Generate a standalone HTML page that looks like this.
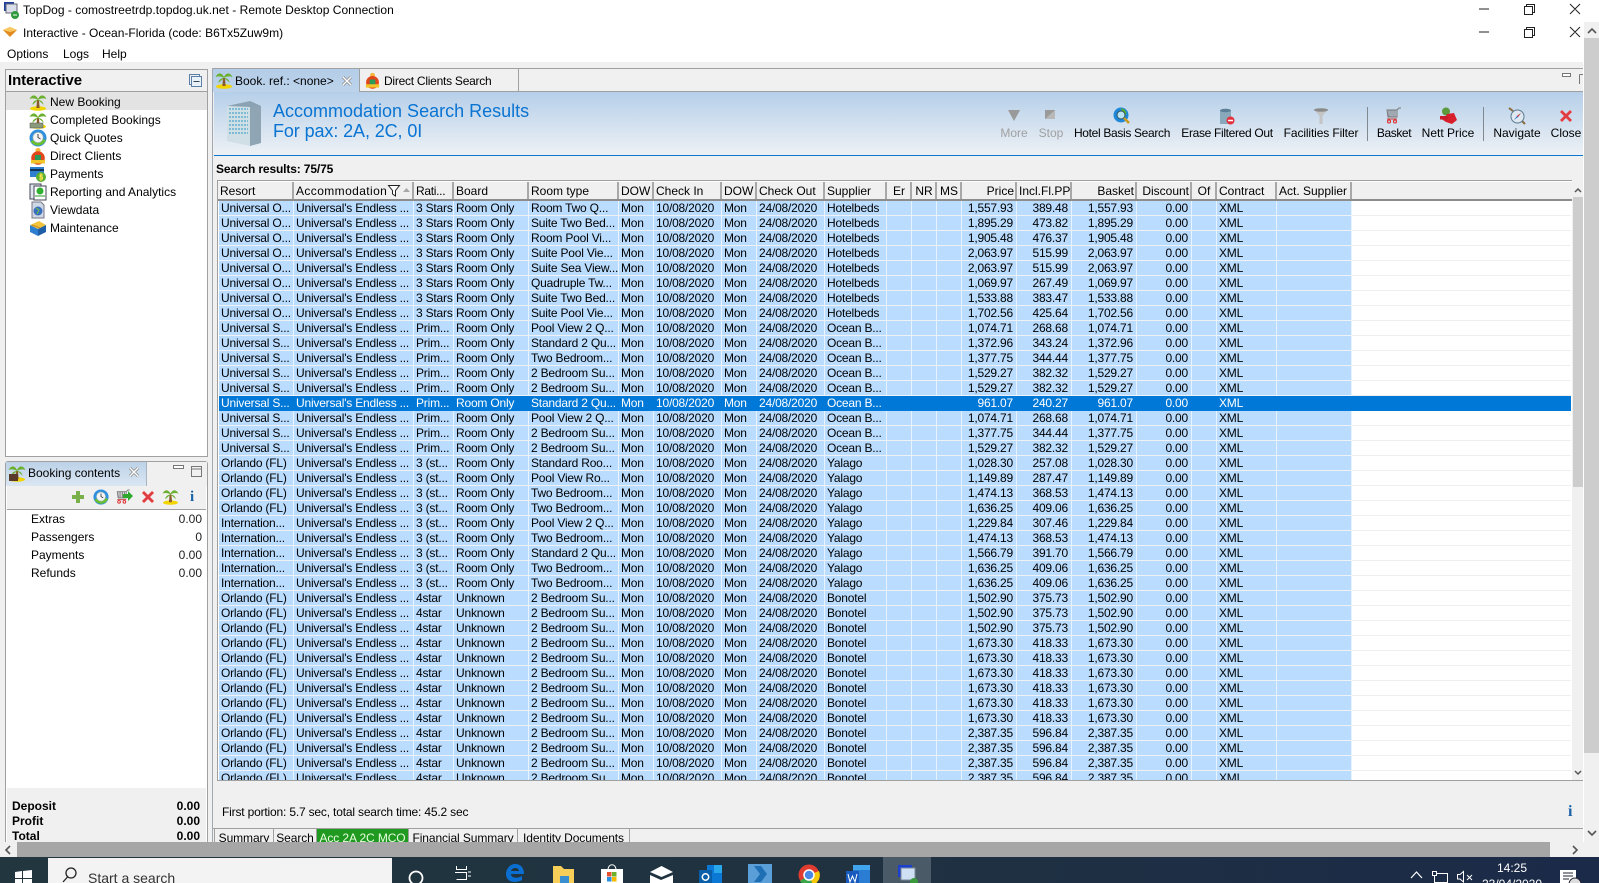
<!DOCTYPE html>
<html><head><meta charset="utf-8"><title>TopDog</title>
<style>
html,body{margin:0;padding:0;background:#fff}
body{position:relative;width:1599px;height:883px;overflow:hidden;font:12px "Liberation Sans",sans-serif;color:#000}
.a{position:absolute}
.t{position:absolute;white-space:nowrap;line-height:16px}
.c{transform:translateX(-50%)}
.r{text-align:right}
svg{position:absolute;overflow:visible}
#g{position:absolute;left:217px;top:180px;width:1355px;height:600px;background:#fff;border-top:1px solid #a0a0a0;border-left:1px solid #a0a0a0;overflow:hidden;box-sizing:border-box}
#h{position:absolute;left:0;top:1px;height:17px;width:1354px;background:#f0f0f0;border-bottom:2px solid #8c8c8c;box-sizing:content-box}
#h span{position:absolute;top:0;height:17px;line-height:18px;white-space:nowrap;border-right:2px solid #a8a8a8;padding:0 1px 0 2px;box-sizing:border-box;overflow:hidden}
table{position:absolute;left:1px;top:20px;border-collapse:separate;border-spacing:0;table-layout:fixed;width:1352px}
td{height:15px;padding:0 3px 0 2px;box-sizing:border-box;border-right:1px solid #e8f3ff;border-bottom:1px solid #eef2f6;background:#b9dcff;white-space:nowrap;overflow:hidden;line-height:14px;letter-spacing:-.2px}
td:nth-child(n+14):nth-child(-n+18){text-align:right}
td:nth-child(21){background:#fff;border-right:0;border-bottom:1px solid #efefef}
tr.s td,tr.s td:nth-child(21){background:#0078d7;color:#fff;border-color:#0078d7}
.btab{position:absolute;top:829px;height:13px;box-sizing:border-box;border-right:1px solid #a0a0a0;overflow:hidden;text-align:center;line-height:18px;white-space:nowrap;background:#f0f0f0;letter-spacing:-.1px}
</style></head><body>
<svg width="0" height="0" style="position:absolute"><defs>
<symbol id="palm" viewBox="0 0 18 18"><ellipse cx="9" cy="15.500" rx="8" ry="2.300" fill="#f2d500"/><path d="M8 7L10 7L10.600 15L7.400 15Z" fill="#8a5a2a"/><path d="M9 6C6.500 1 3 1.500 0.500 6C3 5 6 5 9 7C6 7 3.500 9 3.500 12C6 9.500 8 8 9 7C10 8 13 9.500 14.500 12C14.500 9 12 7 9 7C12 5 15 5 17.500 6C15 1.500 11.500 1 9 6Z" fill="#6cb030"/></symbol>
<symbol id="clock" viewBox="0 0 18 18"><circle cx="9" cy="9" r="8.500" fill="#2f8fe0"/><path d="M1.500 12A8.500 8.500 0 0 0 17 11L13 10A5 5 0 0 1 5 11Z" fill="#6cc02c"/><circle cx="9" cy="8.500" r="5.200" fill="#f4f4f4" stroke="#8aa" stroke-width=".6"/><path d="M9 5V8.500L11.500 10" stroke="#444" fill="none"/></symbol>
<symbol id="client" viewBox="0 0 18 18"><circle cx="9" cy="3.500" r="2.600" fill="#f6b73c"/><circle cx="9" cy="11" r="6.800" fill="#e2461a"/><rect x="6" y="8" width="6" height="6" fill="#2a9a58"/><rect x="2" y="13" width="14" height="3.500" fill="#f2c428"/></symbol>
<symbol id="x" viewBox="0 0 14 14"><path d="M3 1L7 5L11 1L13 3L9 7L13 11L11 13L7 9L3 13L1 11L5 7L1 3Z" fill="#e03c44" stroke="#f08a8a" stroke-width=".5"/></symbol>
<symbol id="cart" viewBox="0 0 18 18"><path d="M2 3H12V10H3ZM4 3V10M6 3V10M8 3V10M10 3V10M12 3L14 1H16" fill="none" stroke="#777" stroke-width="1"/><path d="M2 12H12" stroke="#c33"/><circle cx="4" cy="14.500" r="1.500" fill="none" stroke="#d22"/><circle cx="10" cy="14.500" r="1.500" fill="none" stroke="#d22"/></symbol>
</defs></svg>

<!-- title bars -->
<svg style="left:3px;top:2px" width="16" height="17" viewBox="0 0 16 17"><rect x="1" y="0" width="10" height="9" fill="#1d3f9c"/><rect x="3" y="2" width="11" height="9" fill="#d8dfe8" stroke="#667"/><circle cx="12" cy="13" r="4" fill="#2f9a3c"/><path d="M10 13h4" stroke="#fff"/></svg>
<div class="t" style="left:23px;top:2px;letter-spacing:.03px">TopDog - comostreetrdp.topdog.uk.net - Remote Desktop Connection</div>
<svg style="left:3px;top:27px" width="15" height="11" viewBox="0 0 15 11"><path d="M0 3L7 0L14 3L7 10Z" fill="#e08a20"/><path d="M0 3L7 0L14 3L7 5Z" fill="#f8c860"/></svg>
<div class="t" style="left:23px;top:25px">Interactive - Ocean-Florida (code: B6Tx5Zuw9m)</div>
<div class="t" style="left:7px;top:46px">Options</div><div class="t" style="left:63px;top:46px">Logs</div><div class="t" style="left:102px;top:46px">Help</div>

<svg style="left:1479px;top:3px" width="110" height="40" fill="none" stroke="#222" stroke-width="1">
<path d="M0 6H10M45.500 3.500H53.500V11.500H45.500ZM47.500 3.500V1.500H55.500V9.500H53.500M91 1L101 11M101 1L91 11"/>
<path d="M0 29H10M45.500 26.500H53.500V34.500H45.500ZM47.500 26.500V24.500H55.500V32.500H53.500M91 24L101 34M101 24L91 34"/></svg>

<!-- app bg -->
<div class="a" style="left:0;top:62px;width:1583px;height:780px;background:#f0f0f0"></div>
<div class="a" style="left:1584px;top:22px;width:15px;height:820px;background:#f0f0f0"></div>
<div class="a" style="left:1584px;top:38px;width:15px;height:715px;background:#cdcdcd"></div>
<svg style="left:1587px;top:28px" width="10" height="6" fill="none" stroke="#555" stroke-width="1.600"><path d="M1 5L5 1L9 5"/></svg>
<svg style="left:1587px;top:830px" width="10" height="6" fill="none" stroke="#555" stroke-width="1.600"><path d="M1 1L5 5L9 1"/></svg>

<!-- left panel -->
<div class="a" style="left:5px;top:69px;width:203px;height:388px;background:#fff;border:1px solid #a0a0a0;box-sizing:border-box"></div>
<div class="a" style="left:6px;top:70px;width:201px;height:21px;background:#f0f0f0;border-bottom:1px solid #a0a0a0"></div>
<div class="t" style="left:8px;top:73px;font-size:15px;font-weight:bold;letter-spacing:-.1px">Interactive</div>
<svg style="left:189px;top:74px" width="14" height="14" fill="none" stroke="#5b7fa6"><rect x="0.500" y="0.500" width="10" height="10"/><rect x="2.500" y="2.500" width="10" height="10" fill="#e8f0f8"/><path d="M4.500 7.500H10.500" stroke="#345"/></svg>
<div class="a" style="left:6px;top:92px;width:201px;height:18px;background:#e3e3e3"></div>
<svg style="left:29px;top:93px" width="18" height="18"><use href="#palm"/></svg>
<div class="t" style="left:50px;top:94px">New Booking</div>
<svg style="left:29px;top:111px" width="18" height="18"><use href="#palm"/><rect x="1" y="12" width="13" height="5" fill="#8a9a7a" stroke="#555" stroke-width=".5"/></svg>
<div class="t" style="left:50px;top:112px">Completed Bookings</div>
<svg style="left:29px;top:129px" width="18" height="18"><use href="#clock"/></svg>
<div class="t" style="left:50px;top:130px">Quick Quotes</div>
<svg style="left:29px;top:147px" width="18" height="18"><use href="#client"/></svg>
<div class="t" style="left:50px;top:148px">Direct Clients</div>
<svg style="left:29px;top:165px" width="18" height="18" viewBox="0 0 18 18"><rect x="1" y="2" width="14" height="10" fill="#2f7fd0"/><rect x="1" y="4" width="14" height="2" fill="#135"/><circle cx="12" cy="12" r="5" fill="#5ab030"/><path d="M12 8V16M14 10H11V12H13.500V14H10" stroke="#ffe24a" fill="none"/></svg>
<div class="t" style="left:50px;top:166px">Payments</div>
<svg style="left:29px;top:183px" width="18" height="18" viewBox="0 0 18 18"><rect x="1" y="1" width="11" height="15" fill="#dfe6ee" stroke="#445"/><rect x="5" y="3" width="12" height="14" fill="#fff" stroke="#445"/><circle cx="11" cy="8" r="3.500" fill="#2fb02f"/><path d="M6 13H16" stroke="#2a9a2a"/></svg>
<div class="t" style="left:50px;top:184px">Reporting and Analytics</div>
<svg style="left:29px;top:201px" width="18" height="18" viewBox="0 0 18 18"><path d="M3 1H12L15 4V17H3Z" fill="#cfd6e4" stroke="#778"/><circle cx="9" cy="10" r="4.500" fill="#3a6fc0"/><path d="M7 7L10 9L8 13" stroke="#6cc040" fill="none"/></svg>
<div class="t" style="left:50px;top:202px">Viewdata</div>
<svg style="left:29px;top:219px" width="18" height="18" viewBox="0 0 18 18"><path d="M1 6L10 2L17 6L9 10Z" fill="#f2c43c"/><path d="M1 6V13L9 17V10Z" fill="#2f7fd0"/><path d="M17 6V13L9 17V10Z" fill="#1f5fa8"/><path d="M3 6L11 9" stroke="#c88a20"/></svg>
<div class="t" style="left:50px;top:220px">Maintenance</div>

<!-- booking contents -->
<div class="a" style="left:5px;top:461px;width:203px;height:381px;background:#fff;border:1px solid #a0a0a0;border-bottom:0;box-sizing:border-box;border-radius:3px 3px 0 0"></div>
<div class="a" style="left:6px;top:462px;width:201px;height:24px;background:#f0f0f0"></div>
<div class="a" style="left:6px;top:462px;width:140px;height:24px;background:linear-gradient(#bcd2e8,#dbe6f2);border-right:1px solid #a8b4c0"></div>
<svg style="left:8px;top:464px" width="18" height="18"><use href="#palm"/><rect x="1" y="10" width="9" height="7" fill="#5a3a28"/></svg>
<div class="t" style="left:28px;top:465px">Booking contents</div>
<svg style="left:129px;top:467px" width="10" height="10" fill="none"><path d="M1 1L9 9M9 1L1 9" stroke="#8a8a8a" stroke-width="3"/><path d="M1 1L9 9M9 1L1 9" stroke="#fff" stroke-width="1.400"/></svg>
<svg style="left:173px;top:464px" width="40" height="14" fill="none" stroke="#777"><path d="M0.500 1.500H10.500V4.500H0.500Z" fill="#fff"/><path d="M18.500 2.500H28.500V12.500H18.500ZM18.500 5H28.500"/></svg>
<div class="a" style="left:7px;top:486px;width:199px;height:23px;background:#f0f0f0;border-bottom:1px solid #a0a0a0"></div>
<svg style="left:72px;top:491px" width="12" height="12" viewBox="0 0 12 12"><path d="M4 0H8V4H12V8H8V12H4V8H0V4H4Z" fill="#79b04a"/></svg>
<svg style="left:93px;top:489px" width="16" height="16"><use href="#clock"/></svg>
<svg style="left:115px;top:489px" width="17" height="16"><use href="#cart"/><path d="M8 5h5V2l5 5-5 5V9H8Z" fill="#2fa82f"/></svg>
<svg style="left:141px;top:490px" width="14" height="14"><use href="#x"/></svg>
<svg style="left:162px;top:488px" width="17" height="17"><use href="#palm"/></svg>
<div class="t" style="left:190px;top:489px;font:bold 15px 'Liberation Serif',serif;color:#1a62a8;line-height:16px">i</div>
<div class="t" style="left:31px;top:511px">Extras</div><div class="t r" style="right:1397px;top:511px;color:#222">0.00</div>
<div class="t" style="left:31px;top:529px">Passengers</div><div class="t r" style="right:1397px;top:529px;color:#222">0</div>
<div class="t" style="left:31px;top:547px">Payments</div><div class="t r" style="right:1397px;top:547px;color:#222">0.00</div>
<div class="t" style="left:31px;top:565px">Refunds</div><div class="t r" style="right:1397px;top:565px;color:#222">0.00</div>
<div class="a" style="left:7px;top:788px;width:199px;height:54px;background:#f0f0f0;overflow:hidden">
<div class="t" style="left:5px;top:10px;font-weight:bold">Deposit</div><div class="t" style="right:6px;top:10px;font-weight:bold">0.00</div>
<div class="t" style="left:5px;top:25px;font-weight:bold">Profit</div><div class="t" style="right:6px;top:25px;font-weight:bold">0.00</div>
<div class="t" style="left:5px;top:40px;font-weight:bold">Total</div><div class="t" style="right:6px;top:40px;font-weight:bold">0.00</div>
</div>

<!-- main panel -->
<div class="a" style="left:212px;top:68px;width:1371px;height:1px;background:#a0a0a0"></div>
<div class="a" style="left:212px;top:91px;width:1371px;height:1px;background:#a0a0a0"></div>
<div class="a" style="left:212px;top:68px;width:1px;height:774px;background:#a0a8b4"></div>
<div class="a" style="left:213px;top:69px;width:146px;height:23px;background:linear-gradient(#b4cde8,#bcd3ea);border-right:1px solid #a0a0a0"></div>
<svg style="left:215px;top:71px" width="18" height="18"><use href="#palm"/></svg>
<div class="t" style="left:235px;top:73px">Book. ref.: &lt;none&gt;</div>
<svg style="left:342px;top:76px" width="10" height="10" fill="none"><path d="M1 1L9 9M9 1L1 9" stroke="#8a8a8a" stroke-width="3"/><path d="M1 1L9 9M9 1L1 9" stroke="#fff" stroke-width="1.400"/></svg>
<div class="a" style="left:360px;top:69px;width:158px;height:22px;border-right:1px solid #a0a0a0"></div>
<svg style="left:364px;top:72px" width="17" height="17"><use href="#client"/></svg>
<div class="t" style="left:384px;top:73px;letter-spacing:-.25px">Direct Clients Search</div>
<svg style="left:1562px;top:71px" width="21" height="14" fill="none" stroke="#777"><path d="M0.500 2.500H8.500V5.500H0.500Z" fill="#fff"/><path d="M17.500 3.500H21M17.500 3.500V13"/></svg>

<div class="a" style="left:214px;top:92px;width:1369px;height:63px;background:linear-gradient(#b6cfe9,#edf1f5)"></div>
<div class="a" style="left:214px;top:155px;width:1369px;height:1px;background:#0a78d0"></div>
<svg style="left:226px;top:99px" width="36" height="48" viewBox="0 0 36 48"><path d="M1 7L24 2L35 7V44L24 47L1 42Z" fill="#d0dfe6"/><path d="M24 2L35 7V44L24 47Z" fill="#8fa5b4"/><path d="M3 10H22M3 14H22M3 18H22M3 22H22M3 26H22M3 30H22M3 34H22" stroke="#7bbcd4" stroke-width="2" stroke-dasharray="2 1"/><path d="M1 7L24 2L35 7L24 8Z" fill="#8aa2b2"/></svg>
<div class="t" style="left:273px;top:101px;font-size:18px;line-height:20px;color:#0a74d2">Accommodation Search Results</div>
<div class="t" style="left:273px;top:121px;font-size:18px;line-height:20px;color:#0a74d2;letter-spacing:-.1px">For pax: 2A, 2C, 0I</div>

<svg style="left:1008px;top:110px" width="12" height="12"><path d="M0 0H12L6 11Z" fill="#9a9a9a"/></svg>
<div class="t c" style="left:1014px;top:125px;color:#a0a0a0">More</div>
<svg style="left:1045px;top:110px" width="11" height="10"><rect width="10" height="9" fill="#9a9a9a"/><path d="M0 9L10 0V9Z" fill="#b8b8b8"/></svg>
<div class="t c" style="left:1051px;top:125px;color:#a0a0a0">Stop</div>
<svg style="left:1113px;top:107px" width="18" height="18" viewBox="0 0 18 18"><circle cx="8" cy="8" r="7.500" fill="#1f88d8"/><path d="M8 1C12 2 14 5 13 8L10 7Z" fill="#5ab030"/><circle cx="8" cy="8" r="4" fill="#b8e4f4" stroke="#356"/><path d="M11 11L16 16" stroke="#c89a20" stroke-width="2.500"/></svg>
<div class="t c" style="left:1122px;top:125px;letter-spacing:-.33px">Hotel Basis Search</div>
<svg style="left:1219px;top:108px" width="16" height="18" viewBox="0 0 16 18"><path d="M1 2H12V16H1Z" fill="#8aa8bc"/><ellipse cx="6.500" cy="2.500" rx="5.500" ry="1.800" fill="#5a7f96"/><circle cx="11.500" cy="12.500" r="4" fill="#e2303c"/><path d="M9 12.500H14" stroke="#fff" stroke-width="1.500"/></svg>
<div class="t c" style="left:1227px;top:125px;letter-spacing:-.33px">Erase Filtered Out</div>
<svg style="left:1314px;top:108px" width="14" height="18" viewBox="0 0 14 18"><path d="M0 1H14L8.500 8V16H5.500V8Z" fill="#c4c4c4"/><ellipse cx="7" cy="2" rx="7" ry="1.800" fill="#8a8a8a"/></svg>
<div class="t c" style="left:1321px;top:125px;letter-spacing:-.12px">Facilities Filter</div>
<div class="a" style="left:1367px;top:107px;width:1px;height:34px;background:#808890"></div>
<svg style="left:1385px;top:107px" width="18" height="18"><use href="#cart"/></svg>
<div class="t c" style="left:1394px;top:125px;letter-spacing:-.4px">Basket</div>
<svg style="left:1439px;top:107px" width="19" height="18" viewBox="0 0 19 18"><circle cx="7" cy="4.500" r="4" fill="#5a9a3c"/><path d="M1 11H6L8 7L15 6L18 13L13 17L7 15Z" fill="#d8202c"/><rect x="1" y="9" width="8" height="3.500" fill="#c81c2c"/></svg>
<div class="t c" style="left:1448px;top:125px">Nett Price</div>
<div class="a" style="left:1483px;top:107px;width:1px;height:34px;background:#808890"></div>
<svg style="left:1508px;top:107px" width="18" height="18" viewBox="0 0 18 18"><path d="M1 1L5 4M17 17L14 14" stroke="#8a6a3a" stroke-width="2"/><circle cx="9.500" cy="9.500" r="6.500" fill="#dfe8f0" stroke="#5a7a90"/><path d="M6 13L9 9L13 6L10 10Z" fill="#2a6ac8"/><path d="M9 9L13 6L10 10Z" fill="#d83030"/></svg>
<div class="t c" style="left:1517px;top:125px">Navigate</div>
<svg style="left:1559px;top:109px" width="14" height="14"><use href="#x"/></svg>
<div class="t c" style="left:1566px;top:125px">Close</div>

<div class="t" style="left:216px;top:161px;font-weight:bold;letter-spacing:-.14px">Search results: 75/75</div>

<!-- grid -->
<div id="g">
<div id="h">
<span style="left:0;width:76px">Resort</span>
<span style="left:76px;width:120px;letter-spacing:.4px">Accommodation</span>
<span style="left:196px;width:40px;letter-spacing:-.3px">Rati...</span>
<span style="left:236px;width:75px">Board</span>
<span style="left:311px;width:90px">Room type</span>
<span style="left:401px;width:35px">DOW</span>
<span style="left:436px;width:68px">Check In</span>
<span style="left:504px;width:35px">DOW</span>
<span style="left:539px;width:68px">Check Out</span>
<span style="left:607px;width:62px">Supplier</span>
<span style="left:669px;width:25px;text-align:center">Er</span>
<span style="left:694px;width:25px;text-align:center">NR</span>
<span style="left:719px;width:25px;text-align:center">MS</span>
<span style="left:744px;width:55px;text-align:right">Price</span>
<span style="left:799px;width:55px;text-align:right">Incl.Fl.PP</span>
<span style="left:854px;width:65px;text-align:right">Basket</span>
<span style="left:919px;width:55px;text-align:right">Discount</span>
<span style="left:974px;width:25px;text-align:center">Of</span>
<span style="left:999px;width:60px">Contract</span>
<span style="left:1059px;width:75px">Act. Supplier</span>
<svg style="left:170px;top:3px" width="24" height="12"><path d="M0.500 0.500H11.500L7.500 5.500V11L4.500 9V5.500Z" fill="#fff" stroke="#222"/><path d="M15 7L18.500 3L22 7Z" fill="#a8a8a8"/></svg>
</div>
<table><colgroup><col style="width:75px"><col style="width:120px"><col style="width:40px"><col style="width:75px"><col style="width:90px"><col style="width:35px"><col style="width:68px"><col style="width:35px"><col style="width:68px"><col style="width:62px"><col style="width:25px"><col style="width:25px"><col style="width:25px"><col style="width:55px"><col style="width:55px"><col style="width:65px"><col style="width:55px"><col style="width:25px"><col style="width:60px"><col style="width:75px"><col style="width:219px"></colgroup>
<tr><td>Universal O...<td>Universal's Endless ...<td>3 Stars<td>Room Only<td>Room Two Q...<td>Mon<td>10/08/2020<td>Mon<td>24/08/2020<td>Hotelbeds<td><td><td><td>1,557.93<td>389.48<td>1,557.93<td>0.00<td><td>XML<td><td>
<tr><td>Universal O...<td>Universal's Endless ...<td>3 Stars<td>Room Only<td>Suite Two Bed...<td>Mon<td>10/08/2020<td>Mon<td>24/08/2020<td>Hotelbeds<td><td><td><td>1,895.29<td>473.82<td>1,895.29<td>0.00<td><td>XML<td><td>
<tr><td>Universal O...<td>Universal's Endless ...<td>3 Stars<td>Room Only<td>Room Pool Vi...<td>Mon<td>10/08/2020<td>Mon<td>24/08/2020<td>Hotelbeds<td><td><td><td>1,905.48<td>476.37<td>1,905.48<td>0.00<td><td>XML<td><td>
<tr><td>Universal O...<td>Universal's Endless ...<td>3 Stars<td>Room Only<td>Suite Pool Vie...<td>Mon<td>10/08/2020<td>Mon<td>24/08/2020<td>Hotelbeds<td><td><td><td>2,063.97<td>515.99<td>2,063.97<td>0.00<td><td>XML<td><td>
<tr><td>Universal O...<td>Universal's Endless ...<td>3 Stars<td>Room Only<td>Suite Sea View...<td>Mon<td>10/08/2020<td>Mon<td>24/08/2020<td>Hotelbeds<td><td><td><td>2,063.97<td>515.99<td>2,063.97<td>0.00<td><td>XML<td><td>
<tr><td>Universal O...<td>Universal's Endless ...<td>3 Stars<td>Room Only<td>Quadruple Tw...<td>Mon<td>10/08/2020<td>Mon<td>24/08/2020<td>Hotelbeds<td><td><td><td>1,069.97<td>267.49<td>1,069.97<td>0.00<td><td>XML<td><td>
<tr><td>Universal O...<td>Universal's Endless ...<td>3 Stars<td>Room Only<td>Suite Two Bed...<td>Mon<td>10/08/2020<td>Mon<td>24/08/2020<td>Hotelbeds<td><td><td><td>1,533.88<td>383.47<td>1,533.88<td>0.00<td><td>XML<td><td>
<tr><td>Universal O...<td>Universal's Endless ...<td>3 Stars<td>Room Only<td>Suite Pool Vie...<td>Mon<td>10/08/2020<td>Mon<td>24/08/2020<td>Hotelbeds<td><td><td><td>1,702.56<td>425.64<td>1,702.56<td>0.00<td><td>XML<td><td>
<tr><td>Universal S...<td>Universal's Endless ...<td>Prim...<td>Room Only<td>Pool View 2 Q...<td>Mon<td>10/08/2020<td>Mon<td>24/08/2020<td>Ocean B...<td><td><td><td>1,074.71<td>268.68<td>1,074.71<td>0.00<td><td>XML<td><td>
<tr><td>Universal S...<td>Universal's Endless ...<td>Prim...<td>Room Only<td>Standard 2 Qu...<td>Mon<td>10/08/2020<td>Mon<td>24/08/2020<td>Ocean B...<td><td><td><td>1,372.96<td>343.24<td>1,372.96<td>0.00<td><td>XML<td><td>
<tr><td>Universal S...<td>Universal's Endless ...<td>Prim...<td>Room Only<td>Two Bedroom...<td>Mon<td>10/08/2020<td>Mon<td>24/08/2020<td>Ocean B...<td><td><td><td>1,377.75<td>344.44<td>1,377.75<td>0.00<td><td>XML<td><td>
<tr><td>Universal S...<td>Universal's Endless ...<td>Prim...<td>Room Only<td>2 Bedroom Su...<td>Mon<td>10/08/2020<td>Mon<td>24/08/2020<td>Ocean B...<td><td><td><td>1,529.27<td>382.32<td>1,529.27<td>0.00<td><td>XML<td><td>
<tr><td>Universal S...<td>Universal's Endless ...<td>Prim...<td>Room Only<td>2 Bedroom Su...<td>Mon<td>10/08/2020<td>Mon<td>24/08/2020<td>Ocean B...<td><td><td><td>1,529.27<td>382.32<td>1,529.27<td>0.00<td><td>XML<td><td>
<tr class="s"><td>Universal S...<td>Universal's Endless ...<td>Prim...<td>Room Only<td>Standard 2 Qu...<td>Mon<td>10/08/2020<td>Mon<td>24/08/2020<td>Ocean B...<td><td><td><td>961.07<td>240.27<td>961.07<td>0.00<td><td>XML<td><td>
<tr><td>Universal S...<td>Universal's Endless ...<td>Prim...<td>Room Only<td>Pool View 2 Q...<td>Mon<td>10/08/2020<td>Mon<td>24/08/2020<td>Ocean B...<td><td><td><td>1,074.71<td>268.68<td>1,074.71<td>0.00<td><td>XML<td><td>
<tr><td>Universal S...<td>Universal's Endless ...<td>Prim...<td>Room Only<td>2 Bedroom Su...<td>Mon<td>10/08/2020<td>Mon<td>24/08/2020<td>Ocean B...<td><td><td><td>1,377.75<td>344.44<td>1,377.75<td>0.00<td><td>XML<td><td>
<tr><td>Universal S...<td>Universal's Endless ...<td>Prim...<td>Room Only<td>2 Bedroom Su...<td>Mon<td>10/08/2020<td>Mon<td>24/08/2020<td>Ocean B...<td><td><td><td>1,529.27<td>382.32<td>1,529.27<td>0.00<td><td>XML<td><td>
<tr><td>Orlando (FL)<td>Universal's Endless ...<td>3 (st...<td>Room Only<td>Standard Roo...<td>Mon<td>10/08/2020<td>Mon<td>24/08/2020<td>Yalago<td><td><td><td>1,028.30<td>257.08<td>1,028.30<td>0.00<td><td>XML<td><td>
<tr><td>Orlando (FL)<td>Universal's Endless ...<td>3 (st...<td>Room Only<td>Pool View Ro...<td>Mon<td>10/08/2020<td>Mon<td>24/08/2020<td>Yalago<td><td><td><td>1,149.89<td>287.47<td>1,149.89<td>0.00<td><td>XML<td><td>
<tr><td>Orlando (FL)<td>Universal's Endless ...<td>3 (st...<td>Room Only<td>Two Bedroom...<td>Mon<td>10/08/2020<td>Mon<td>24/08/2020<td>Yalago<td><td><td><td>1,474.13<td>368.53<td>1,474.13<td>0.00<td><td>XML<td><td>
<tr><td>Orlando (FL)<td>Universal's Endless ...<td>3 (st...<td>Room Only<td>Two Bedroom...<td>Mon<td>10/08/2020<td>Mon<td>24/08/2020<td>Yalago<td><td><td><td>1,636.25<td>409.06<td>1,636.25<td>0.00<td><td>XML<td><td>
<tr><td>Internation...<td>Universal's Endless ...<td>3 (st...<td>Room Only<td>Pool View 2 Q...<td>Mon<td>10/08/2020<td>Mon<td>24/08/2020<td>Yalago<td><td><td><td>1,229.84<td>307.46<td>1,229.84<td>0.00<td><td>XML<td><td>
<tr><td>Internation...<td>Universal's Endless ...<td>3 (st...<td>Room Only<td>Two Bedroom...<td>Mon<td>10/08/2020<td>Mon<td>24/08/2020<td>Yalago<td><td><td><td>1,474.13<td>368.53<td>1,474.13<td>0.00<td><td>XML<td><td>
<tr><td>Internation...<td>Universal's Endless ...<td>3 (st...<td>Room Only<td>Standard 2 Qu...<td>Mon<td>10/08/2020<td>Mon<td>24/08/2020<td>Yalago<td><td><td><td>1,566.79<td>391.70<td>1,566.79<td>0.00<td><td>XML<td><td>
<tr><td>Internation...<td>Universal's Endless ...<td>3 (st...<td>Room Only<td>Two Bedroom...<td>Mon<td>10/08/2020<td>Mon<td>24/08/2020<td>Yalago<td><td><td><td>1,636.25<td>409.06<td>1,636.25<td>0.00<td><td>XML<td><td>
<tr><td>Internation...<td>Universal's Endless ...<td>3 (st...<td>Room Only<td>Two Bedroom...<td>Mon<td>10/08/2020<td>Mon<td>24/08/2020<td>Yalago<td><td><td><td>1,636.25<td>409.06<td>1,636.25<td>0.00<td><td>XML<td><td>
<tr><td>Orlando (FL)<td>Universal's Endless ...<td>4star<td>Unknown<td>2 Bedroom Su...<td>Mon<td>10/08/2020<td>Mon<td>24/08/2020<td>Bonotel<td><td><td><td>1,502.90<td>375.73<td>1,502.90<td>0.00<td><td>XML<td><td>
<tr><td>Orlando (FL)<td>Universal's Endless ...<td>4star<td>Unknown<td>2 Bedroom Su...<td>Mon<td>10/08/2020<td>Mon<td>24/08/2020<td>Bonotel<td><td><td><td>1,502.90<td>375.73<td>1,502.90<td>0.00<td><td>XML<td><td>
<tr><td>Orlando (FL)<td>Universal's Endless ...<td>4star<td>Unknown<td>2 Bedroom Su...<td>Mon<td>10/08/2020<td>Mon<td>24/08/2020<td>Bonotel<td><td><td><td>1,502.90<td>375.73<td>1,502.90<td>0.00<td><td>XML<td><td>
<tr><td>Orlando (FL)<td>Universal's Endless ...<td>4star<td>Unknown<td>2 Bedroom Su...<td>Mon<td>10/08/2020<td>Mon<td>24/08/2020<td>Bonotel<td><td><td><td>1,673.30<td>418.33<td>1,673.30<td>0.00<td><td>XML<td><td>
<tr><td>Orlando (FL)<td>Universal's Endless ...<td>4star<td>Unknown<td>2 Bedroom Su...<td>Mon<td>10/08/2020<td>Mon<td>24/08/2020<td>Bonotel<td><td><td><td>1,673.30<td>418.33<td>1,673.30<td>0.00<td><td>XML<td><td>
<tr><td>Orlando (FL)<td>Universal's Endless ...<td>4star<td>Unknown<td>2 Bedroom Su...<td>Mon<td>10/08/2020<td>Mon<td>24/08/2020<td>Bonotel<td><td><td><td>1,673.30<td>418.33<td>1,673.30<td>0.00<td><td>XML<td><td>
<tr><td>Orlando (FL)<td>Universal's Endless ...<td>4star<td>Unknown<td>2 Bedroom Su...<td>Mon<td>10/08/2020<td>Mon<td>24/08/2020<td>Bonotel<td><td><td><td>1,673.30<td>418.33<td>1,673.30<td>0.00<td><td>XML<td><td>
<tr><td>Orlando (FL)<td>Universal's Endless ...<td>4star<td>Unknown<td>2 Bedroom Su...<td>Mon<td>10/08/2020<td>Mon<td>24/08/2020<td>Bonotel<td><td><td><td>1,673.30<td>418.33<td>1,673.30<td>0.00<td><td>XML<td><td>
<tr><td>Orlando (FL)<td>Universal's Endless ...<td>4star<td>Unknown<td>2 Bedroom Su...<td>Mon<td>10/08/2020<td>Mon<td>24/08/2020<td>Bonotel<td><td><td><td>1,673.30<td>418.33<td>1,673.30<td>0.00<td><td>XML<td><td>
<tr><td>Orlando (FL)<td>Universal's Endless ...<td>4star<td>Unknown<td>2 Bedroom Su...<td>Mon<td>10/08/2020<td>Mon<td>24/08/2020<td>Bonotel<td><td><td><td>2,387.35<td>596.84<td>2,387.35<td>0.00<td><td>XML<td><td>
<tr><td>Orlando (FL)<td>Universal's Endless ...<td>4star<td>Unknown<td>2 Bedroom Su...<td>Mon<td>10/08/2020<td>Mon<td>24/08/2020<td>Bonotel<td><td><td><td>2,387.35<td>596.84<td>2,387.35<td>0.00<td><td>XML<td><td>
<tr><td>Orlando (FL)<td>Universal's Endless ...<td>4star<td>Unknown<td>2 Bedroom Su...<td>Mon<td>10/08/2020<td>Mon<td>24/08/2020<td>Bonotel<td><td><td><td>2,387.35<td>596.84<td>2,387.35<td>0.00<td><td>XML<td><td>
<tr><td>Orlando (FL)<td>Universal's Endless ...<td>4star<td>Unknown<td>2 Bedroom Su...<td>Mon<td>10/08/2020<td>Mon<td>24/08/2020<td>Bonotel<td><td><td><td>2,387.35<td>596.84<td>2,387.35<td>0.00<td><td>XML<td><td>
</table>
</div>
<div class="a" style="left:217px;top:780px;width:1366px;height:1px;background:#a0a0a0"></div>
<div class="a" style="left:1573px;top:182px;width:10px;height:597px;background:#f0f0f0"></div>
<div class="a" style="left:1573px;top:197px;width:10px;height:290px;background:#cdcdcd"></div>
<svg style="left:1574px;top:188px" width="8" height="5" fill="none" stroke="#555" stroke-width="1.500"><path d="M1 4L4 1L7 4"/></svg>
<svg style="left:1574px;top:770px" width="8" height="5" fill="none" stroke="#555" stroke-width="1.500"><path d="M1 1L4 4L7 1"/></svg>

<div class="t" style="left:222px;top:804px;letter-spacing:-.18px">First portion: 5.7 sec, total search time: 45.2 sec</div>
<div class="t" style="left:1568px;top:804px;font:bold 16px 'Liberation Serif',serif;color:#1a62a8;line-height:16px">i</div>
<div class="a" style="left:213px;top:828px;width:1370px;height:1px;background:#a0a0a0"></div>
<div class="btab" style="left:214px;width:60px;border-left:1px solid #a0a0a0">Summary</div>
<div class="btab" style="left:274px;width:43px">Search</div>
<div class="btab" style="left:317px;width:92px;background:#1f991f;color:#e8ffe0">Acc 2A 2C MCO</div>
<div class="btab" style="left:409px;width:109px">Financial Summary</div>
<div class="btab" style="left:518px;width:112px">Identity Documents</div>

<!-- page scrollbar -->
<div class="a" style="left:0;top:842px;width:1599px;height:15px;background:#f0f0f0"></div>
<div class="a" style="left:17px;top:842px;width:1533px;height:15px;background:#a6a6a6"></div>
<svg style="left:5px;top:845px" width="6" height="10" fill="none" stroke="#555" stroke-width="1.600"><path d="M5 1L1 5L5 9"/></svg>
<svg style="left:1572px;top:845px" width="6" height="10" fill="none" stroke="#555" stroke-width="1.600"><path d="M1 1L5 5L1 9"/></svg>

<!-- taskbar -->
<div class="a" style="left:0;top:857px;width:1599px;height:26px;background:linear-gradient(90deg,#21363f,#203240 50%,#1b2a48);overflow:hidden">
<svg style="left:15px;top:13px" width="18" height="18"><path d="M0 2L7 1V8H0ZM8 1L17 0V8H8ZM0 9H7V16L0 15ZM8 9H17V17L8 16Z" fill="#fff"/></svg>
<div class="a" style="left:48px;top:1px;width:344px;height:26px;background:#f3f3f3"></div>
<svg style="left:62px;top:10px" width="16" height="16" fill="none" stroke="#222" stroke-width="1.300"><circle cx="9" cy="6" r="5"/><path d="M5.500 10L1 15"/></svg>
<div class="t" style="left:88px;top:13px;font-size:14px;color:#333">Start a search</div>
<svg style="left:408px;top:12px" width="16" height="16" fill="none" stroke="#fff" stroke-width="1.800"><circle cx="8" cy="9" r="6.500"/></svg>
<svg style="left:455px;top:9px" width="17" height="17" fill="none" stroke="#fff"><path d="M1.500 0V3.500H11.500V0M0 6.500H11.500V13.500H1.500M13 6H16M13 10H16"/></svg>
<svg style="left:505px;top:7px" width="20" height="20"><path d="M10 0C16 0 19 4 19 10H6C6 14 12 15 17 12V16C10 20 1 18 1 10C1 5 5 0 10 0ZM6 7H14C14 3 7 3 6 7Z" fill="#0a6fd0"/></svg>
<svg style="left:553px;top:9px" width="22" height="20"><path d="M0 0H8L11 3H21V20H0Z" fill="#f6ce58"/><rect x="7" y="10" width="9" height="7" fill="#3a8fd0"/></svg>
<svg style="left:601px;top:7px" width="23" height="20"><path d="M7 6C7 -1 15 -1 15 6" fill="none" stroke="#fff"/><rect y="5" width="22" height="16" fill="#fff"/><rect x="6" y="8" width="4.500" height="4.500" fill="#e6502c"/><rect x="11" y="8" width="4.500" height="4.500" fill="#6cb02c"/><rect x="6" y="13" width="4.500" height="4.500" fill="#2a8fe0"/><rect x="11" y="13" width="4.500" height="4.500" fill="#f8b800"/></svg>
<svg style="left:650px;top:9px" width="23" height="18"><path d="M0 6L11.500 0L23 6L11.500 11Z" fill="#fff"/><path d="M0 9L11 14L23 9V20H0Z" fill="#fff"/></svg>
<svg style="left:699px;top:8px" width="24" height="20"><rect x="8" y="0" width="15" height="20" fill="#0a78d4"/><rect x="15" y="0" width="8" height="8" fill="#28a8ea"/><rect x="0" y="5" width="13" height="15" fill="#0a5fa8"/><circle cx="6.500" cy="12" r="3.200" fill="none" stroke="#fff" stroke-width="1.500"/></svg>
<svg style="left:748px;top:7px" width="24" height="20"><rect width="24" height="20" fill="#5b9fd8"/><path d="M6 2H13L19 10L13 18H6L12 10Z" fill="#1f6fb4"/></svg>
<svg style="left:798px;top:7px" width="22" height="22"><circle cx="11" cy="11" r="10.500" fill="#e03c30"/><path d="M11 11L2 17A10.500 10.500 0 0 0 15 21Z" fill="#3aa84a"/><path d="M11 11L21 7A10.500 10.500 0 0 1 15 21Z" fill="#f8c80c"/><circle cx="11" cy="11" r="5" fill="#4a88e8" stroke="#fff" stroke-width="1.500"/></svg>
<svg style="left:846px;top:8px" width="24" height="20"><rect x="7" y="0" width="17" height="20" fill="#2b7cd3"/><rect x="7" y="0" width="17" height="5" fill="#41a5ee"/><rect x="0" y="6" width="13" height="14" fill="#185abd"/><path d="M2 9L4 17L6.500 11L9 17L11 9" stroke="#fff" fill="none"/></svg>
<div class="a" style="left:883px;top:0;width:48px;height:26px;background:#4a5a66"></div>
<svg style="left:896px;top:8px" width="22" height="20"><rect x="2" y="0" width="14" height="12" fill="#1d3fd0"/><rect x="5" y="3" width="14" height="12" fill="#cfe0f4" stroke="#789"/><circle cx="18" cy="17" r="4" fill="#3a9a3c"/></svg>
<svg style="left:1410px;top:14px" width="13" height="8" fill="none" stroke="#fff" stroke-width="1.200"><path d="M1 7L6.500 1L12 7"/></svg>
<svg style="left:1432px;top:14px" width="16" height="14" fill="none" stroke="#fff"><path d="M0.500 0.500H4.500V4.500H0.500ZM4.500 2.500H15.500V11.500H2.500V4.500M7 11.500V15"/></svg>
<svg style="left:1457px;top:14px" width="16" height="12" fill="none" stroke="#fff"><path d="M0.500 3.500H3L6.500 0.500V11L3 8H0.500ZM10 4L15 9M15 4L10 9"/></svg>
<div class="t c" style="left:1512px;top:3px;color:#fff">14:25</div>
<div class="t c" style="left:1512px;top:19px;color:#fff">23/04/2020</div>
<svg style="left:1560px;top:13px" width="20" height="16"><path d="M0 0H16V14H0Z" fill="#fff"/><path d="M3 3H13M3 6H13M3 9H9" stroke="#223"/><circle cx="15" cy="14" r="6" fill="#ddd" stroke="#223"/></svg>
</div>
</body></html>
